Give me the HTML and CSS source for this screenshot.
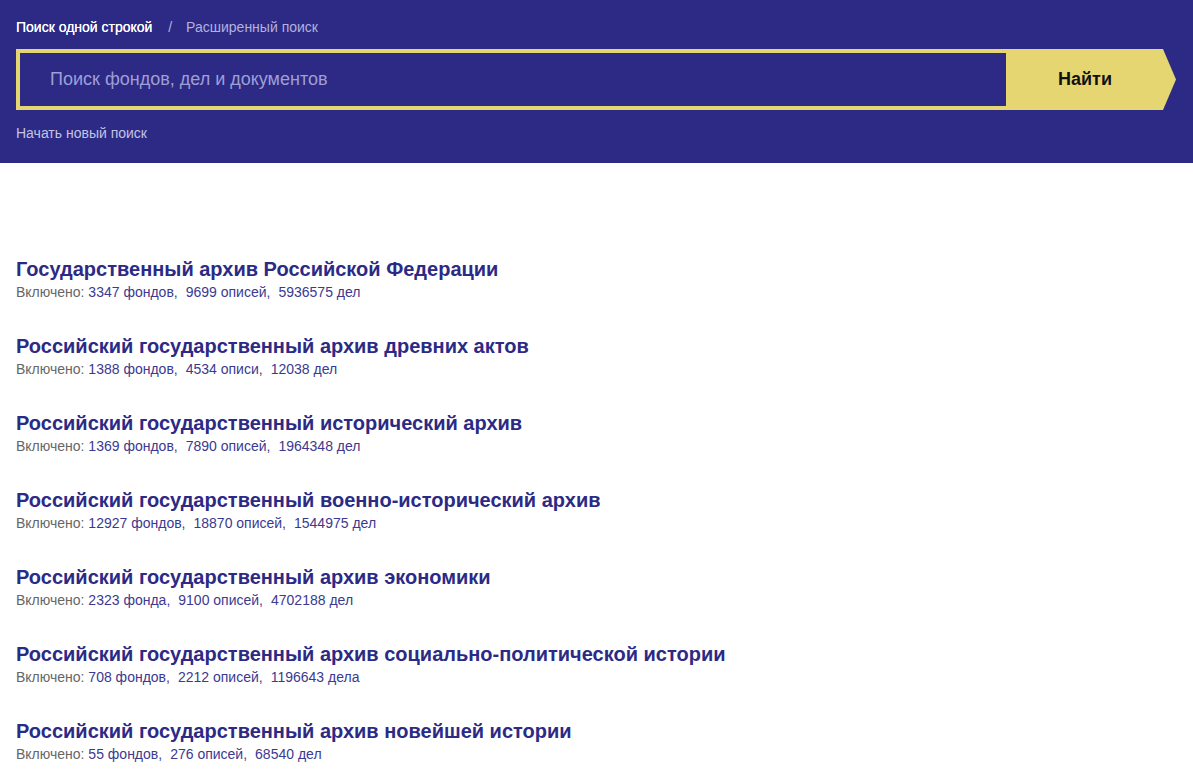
FILE: index.html
```html
<!DOCTYPE html>
<html lang="ru">
<head>
  <meta charset="UTF-8">
  <title>Поиск по архивам</title>
  <link rel="stylesheet" href="styles.css">
</head>
<body>

  <header class="search-head">
    <div class="tabs">
      <a class="tab active" href="#">Поиск одной строкой</a>
      <span class="sep">/</span>
      <a class="tab" href="#">Расширенный поиск</a>
    </div>
    <form class="search-form">
      <input type="text" class="search-input" placeholder="Поиск фондов, дел и документов">
      <button type="submit" class="search-btn">Найти</button>
    </form>
    <a class="reset" href="#">Начать новый поиск</a>
  </header>

  <div class="archives">
    <div class="archive">
      <a class="archive-title" href="#">Государственный архив Российской Федерации</a>
      <div class="archive-meta">Включено: <span>3347 фондов,</span><span>9699 описей,</span><span>5936575 дел</span></div>
    </div>
    <div class="archive">
      <a class="archive-title" href="#">Российский государственный архив древних актов</a>
      <div class="archive-meta">Включено: <span>1388 фондов,</span><span>4534 описи,</span><span>12038 дел</span></div>
    </div>
    <div class="archive">
      <a class="archive-title" href="#">Российский государственный исторический архив</a>
      <div class="archive-meta">Включено: <span>1369 фондов,</span><span>7890 описей,</span><span>1964348 дел</span></div>
    </div>
    <div class="archive">
      <a class="archive-title" href="#">Российский государственный военно-исторический архив</a>
      <div class="archive-meta">Включено: <span>12927 фондов,</span><span>18870 описей,</span><span>1544975 дел</span></div>
    </div>
    <div class="archive">
      <a class="archive-title" href="#">Российский государственный архив экономики</a>
      <div class="archive-meta">Включено: <span>2323 фонда,</span><span>9100 описей,</span><span>4702188 дел</span></div>
    </div>
    <div class="archive">
      <a class="archive-title" href="#">Российский государственный архив социально-политической истории</a>
      <div class="archive-meta">Включено: <span>708 фондов,</span><span>2212 описей,</span><span>1196643 дела</span></div>
    </div>
    <div class="archive">
      <a class="archive-title" href="#">Российский государственный архив новейшей истории</a>
      <div class="archive-meta">Включено: <span>55 фондов,</span><span>276 описей,</span><span>68540 дел</span></div>
    </div>
  </div>

</body>
</html>
```

FILE: styles.css
```css
body {
  margin: 0;
  font-family: "Liberation Sans", Arial, sans-serif;
  background: #fff;
}

a {
  text-decoration: none;
}

.search-head {
  background: #2c2a85;
  padding: 18px 17px 21px 16px;
}

.tabs {
  font-size: 14px;
  line-height: 18px;
  color: #b3b2dc;
}

.tab {
  color: #b3b2dc;
}

.tab.active {
  color: #fff;
  text-shadow: 0 0 0.6px #fff;
}

.sep {
  margin: 0 10px 0 12px;
}

.search-form {
  display: flex;
  margin-top: 13px;
  height: 61px;
}

.search-input {
  flex: 1;
  box-sizing: border-box;
  height: 61px;
  border: 4px solid #e6d672;
  border-right: none;
  background: #2c2a85;
  padding: 0 0 0 30px;
  font-family: inherit;
  font-size: 18px;
  color: #fff;
  outline: none;
}

.search-input::placeholder {
  color: #9f9ed6;
}

.search-btn {
  width: 170px;
  height: 61px;
  border: none;
  background: #e6d672;
  font-family: inherit;
  font-size: 18px;
  font-weight: bold;
  color: #111;
  padding: 0 12px 0 0;
  cursor: pointer;
  clip-path: polygon(0 0, 157px 0, 100% 50%, 157px 100%, 0 100%);
}

.reset {
  display: block;
  margin-top: 14px;
  font-size: 14px;
  line-height: 18px;
  color: #c4c3e3;
}

.archives {
  padding: 94px 16px 0;
}

.archive {
  margin-bottom: 31px;
}

.archive-title {
  display: block;
  font-size: 20px;
  font-weight: bold;
  color: #2c2a85;
  line-height: 24px;
}

.archive-meta {
  font-size: 14px;
  color: #666;
  line-height: 22px;
}

.archive-meta span {
  color: #3b3990;
  margin-right: 8px;
}
```
